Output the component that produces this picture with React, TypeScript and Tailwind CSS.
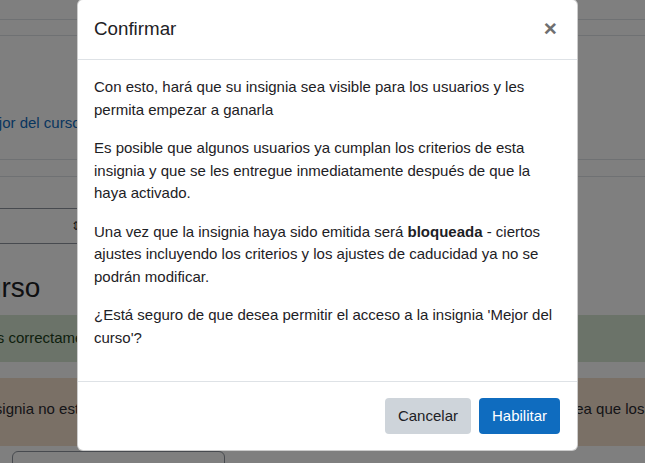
import React from "react";

const font = { fontFamily: '"Liberation Sans", Arial, sans-serif' };

const Page: React.FC = () => {
  return (
    <div className="w-[645px] h-[463px] overflow-hidden bg-white text-[15px] leading-[1.5] text-[#1d2125]">
      {/* top bars */}
      <div className="h-[19px]" />
      <div className="h-[17px] border-y border-[#dee2e6]" />
      <div className="h-[123px] pt-[76px]">
        <a className="block whitespace-nowrap -ml-[22px] text-[#0f6cbf]">Mejor del curso</a>
      </div>
      <div className="h-[18px] border-y border-[#dee2e6]" />

      {/* select */}
      <div className="mt-[31px] -ml-[10px] w-[100px] h-[36px] border border-[#8f959e] rounded-[6px] flex items-center justify-end pr-[8px] text-[12px] text-[#1d2125]">
        ⇕
      </div>

      {/* heading */}
      <h2 className="mt-[27px] whitespace-nowrap -ml-[151px] text-[28px] leading-[1.2]">Mejor del curso</h2>

      {/* success alert */}
      <div className="mt-[10px] h-[47px] bg-[#d6e6d2] text-[#1c3f1a] flex items-center whitespace-nowrap">
        <span className="-ml-[130px]">Cambios guardados correctamente</span>
      </div>

      {/* warning alert */}
      <div className="mt-[16px] h-[68px] bg-[#f5e1cd] text-[#2a2a30] pt-[20px] whitespace-nowrap">
        <span className="block -ml-[51px]">
          Esta insignia no está disponible para los usuarios, en este momento. Habilite el acceso, si desea que los usuarios ganen esta insignia.
        </span>
      </div>

      {/* bottom field */}
      <div className="mt-[5px] ml-[12px] w-[213px] h-[40px] border border-[#8f959e] rounded-[6px]" />
    </div>
  );
};

const Modal: React.FC = () => {
  return (
    <div className="absolute left-[77px] top-[-1px] w-[501px] bg-white border border-black/20 rounded-[6px] text-[#1d2125]">
      <div className="h-[60px] border-b border-[#dee2e6] flex items-center justify-between pl-4 pr-[20px]">
        <h5 className="text-[18.75px] leading-[1.2]">Confirmar</h5>
        <button className="text-[22.5px] font-bold leading-none text-[#6f6f6f]">×</button>
      </div>
      <div className="p-4 text-[15px] leading-[1.5]">
        <p className="mb-4">
          Con esto, hará que su insignia sea visible para los usuarios y les permita empezar a ganarla
        </p>
        <p className="mb-4">
          Es posible que algunos usuarios ya cumplan los criterios de esta insignia y que se les entregue inmediatamente después de que la haya activado.
        </p>
        <p className="mb-4">
          Una vez que la insignia haya sido emitida será <strong>bloqueada</strong> - ciertos ajustes incluyendo los criterios y los ajustes de caducidad ya no se podrán modificar.
        </p>
        <p className="mb-4">
          ¿Está seguro de que desea permitir el acceso a la insignia 'Mejor del curso'?
        </p>
      </div>
      <div className="border-t border-[#dee2e6] pt-3 pb-3 pl-3 pr-[13px] flex justify-end">
        <button className="m-1 h-[36px] px-[13px] rounded-[4px] bg-[#ced4da] text-[#1d2125] text-[15px]">Cancelar</button>
        <button className="m-1 h-[36px] px-[13px] rounded-[4px] bg-[#0f6cbf] text-white text-[15px]">Habilitar</button>
      </div>
    </div>
  );
};

export default function App() {
  return (
    <div className="relative w-[645px] h-[463px] overflow-hidden" style={font}>
      <Page />
      <div className="absolute inset-0 bg-black/50" />
      <Modal />
    </div>
  );
}
